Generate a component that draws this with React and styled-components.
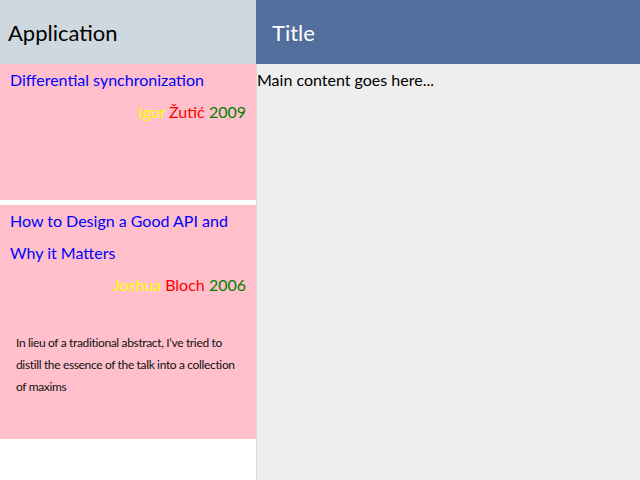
import * as React from 'react';
import styled, { createGlobalStyle } from 'styled-components';

const GlobalStyle = createGlobalStyle`
  html, body {
    margin: 0;
    padding: 0;
    height: 100%;
  }
  body {
    font-family: Lato, "Open Sans", sans-serif;
    background: #ffffff;
  }
  #root {
    height: 100%;
  }
`;

const Layout = styled.div`
  display: grid;
  grid-template-columns: 256px 1fr;
  grid-template-rows: 64px 1fr;
  height: 100vh;
`;

const Header = styled.header`
  display: flex;
  align-items: center;
  padding: 0 ${(props) => props.$pad}px;
  background: ${(props) => props.$bg};
  color: ${(props) => props.$fg};
  font-size: 22px;
`;

const Sidebar = styled.nav`
  display: flex;
  flex-direction: column;
  gap: 5px;
  background: #ffffff;
`;

const Card = styled.article`
  background: pink;
  padding: 0 10px 8px;
`;

const CardTitle = styled.div`
  color: blue;
  font-size: 16px;
  line-height: 32px;
`;

const Byline = styled.div`
  text-align: right;
  font-size: 16px;
  line-height: 32px;
`;

const Name = styled.span`
  color: ${(props) => props.$color};
`;

const Abstract = styled.p`
  margin: 0;
  padding: 31px 6px 33px;
  font-size: 12px;
  letter-spacing: -0.35px;
  line-height: 22px;
  color: #111;
`;

const Main = styled.main`
  background: #eeeeee;
  border-left: 1px solid #dcdcdc;
  font-size: 16px;
  line-height: 32px;
  color: #000;
`;

const papers = [
  {
    title: 'Differential synchronization',
    first: 'Igor',
    last: 'Žutić',
    year: 2009,
    abstract: '',
  },
  {
    title: 'How to Design a Good API and Why it Matters',
    first: 'Joshua',
    last: 'Bloch',
    year: 2006,
    abstract:
      'In lieu of a traditional abstract, I’ve tried to distill the essence of the talk into a collection of maxims',
  },
];

function App() {
  return (
    <>
      <GlobalStyle />
      <Layout>
        <Header $bg="#d0d8df" $fg="#000" $pad={8}>
          Application
        </Header>
        <Header $bg="#516e9c" $fg="#fff" $pad={16}>
          Title
        </Header>
        <Sidebar>
          {papers.map((p) => (
            <Card key={p.title}>
              <CardTitle>{p.title}</CardTitle>
              <Byline>
                <Name $color="yellow">{p.first}</Name>{' '}
                <Name $color="red">{p.last}</Name>{' '}
                <Name $color="green">{p.year}</Name>
              </Byline>
              <Abstract>{p.abstract}</Abstract>
            </Card>
          ))}
        </Sidebar>
        <Main>Main content goes here...</Main>
      </Layout>
    </>
  );
}

export default App;
